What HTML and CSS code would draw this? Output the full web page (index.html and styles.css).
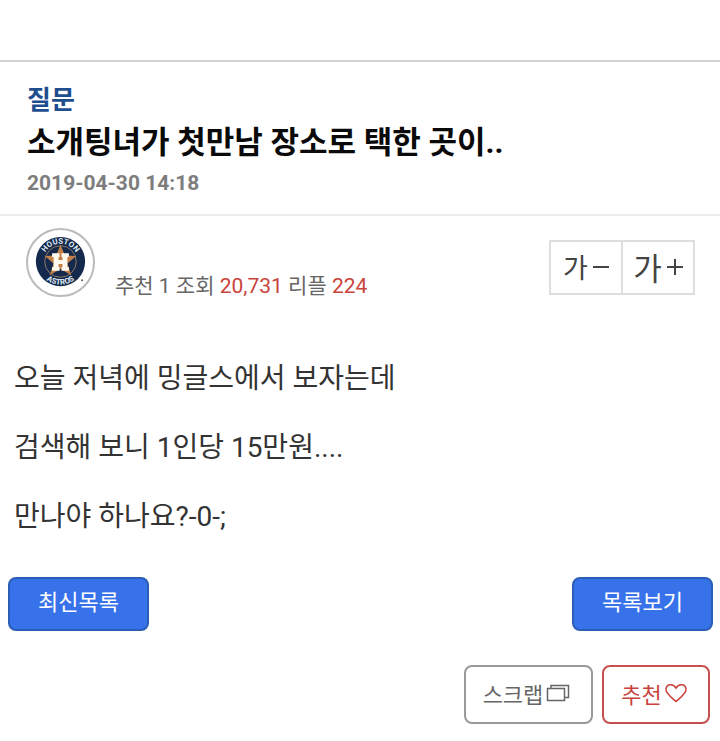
FILE: index.html
```
<!DOCTYPE html>
<html lang="ko">
<head>
  <meta charset="UTF-8">
  <meta name="viewport" content="width=device-width, initial-scale=1.0">
  <title>소개팅녀가 첫만남 장소로 택한 곳이..</title>
  <link rel="stylesheet" href="styles.css">
</head>
<body>
  <header class="post-head">
    <a class="category" href="#">질문</a>
    <h1>소개팅녀가 첫만남 장소로 택한 곳이..</h1>
    <time datetime="2019-04-30T14:18">2019-04-30 14:18</time>
  </header>

  <div class="post-info">
    <div class="avatar">
      <svg viewBox="0 0 66 66" role="img" aria-label="Houston Astros">
        <defs>
          <path id="arcTop" d="M15 32 A18 18 0 0 1 51 32"/>
          <path id="arcBottom" d="M9.500 32 A23.500 23.500 0 0 0 56.500 32"/>
        </defs>
        <circle cx="33" cy="32" r="25" fill="#14294b"/>
        <circle cx="33" cy="32" r="16" fill="none" stroke="#8f7a6a" stroke-width="1"/>
        <path d="M33 15 L37.500 26 L49 26.500 L40 34 L44 46 L33 39.500 L22 46 L26 34 L17 26.500 L28.500 26 Z" fill="#c08048"/>
        <path d="M24.500 23.500 H32 V27.500 H31 V30.500 H35 V27.500 H34 V23.500 H41.500 V27.500 H40 V37.500 H41.500 V41.500 H34 V37.500 H35 V34.500 H31 V37.500 H32 V41.500 H24.500 V37.500 H26 V27.500 H24.500 Z" fill="#fffaf0"/>
        <text class="logo-text"><textPath href="#arcTop" startOffset="50%">HOUSTON</textPath></text>
        <text class="logo-text"><textPath href="#arcBottom" startOffset="50%">ASTROS</textPath></text>
        <circle cx="55" cy="51" r="1" fill="#6b5050"/>
      </svg>
    </div>
    <p class="counts">추천 1 조회 <span class="num">20,731</span> 리플 <span class="num">224</span></p>
    <div class="font-size">
      <button type="button" class="smaller" aria-label="글자 작게">가
        <svg width="16" height="18" viewBox="0 0 16 18"><path d="M0 9H16"/></svg>
      </button>
      <button type="button" class="larger" aria-label="글자 크게">가
        <svg width="16" height="18" viewBox="0 0 16 18"><path d="M0 9H16M8 1V17"/></svg>
      </button>
    </div>
  </div>

  <main class="post-body">
    <p>오늘 저녁에 밍글스에서 보자는데</p>
    <p>검색해 보니 1인당 15만원....</p>
    <p>만나야 하나요?-0-;</p>
  </main>

  <nav class="list-nav">
    <button type="button" class="btn-list">최신목록</button>
    <button type="button" class="btn-list">목록보기</button>
  </nav>

  <div class="actions">
    <button type="button" class="btn-scrap">스크랩
      <svg width="24" height="20" viewBox="0 0 24 20"><path d="M1.500 5.500H18.500V17.500H1.500ZM5 5V2.500H22.500V14.500H19"/></svg>
    </button>
    <button type="button" class="btn-like">추천
      <svg width="22" height="20" viewBox="0 0 22 20"><path d="M11 18.500C8 15.500 1 11 1 6.500C1 1 8 0 11 5C14 0 21 1 21 6.500C21 11 14 15.500 11 18.500Z"/></svg>
    </button>
  </div>
</body>
</html>
```
FILE: styles.css
```
* { box-sizing: border-box; }
body { margin: 0; padding-top: 60px; background: #fff; color: #333; font-family: Roboto, "Noto Sans CJK KR", sans-serif; }
h1, p { margin: 0; }
a { text-decoration: none; }
button { padding: 0; background: #fff; font-family: inherit; cursor: pointer; }
svg { display: block; fill: none; stroke: currentColor; stroke-width: 2; }

.post-head { padding: 20px 27px 16px; border-top: 2px solid #d2d2d2; border-bottom: 2px solid #ebebeb; }
.category { display: block; font-size: 26px; line-height: 36px; font-weight: bold; color: #1f4e8f; }
h1 { font-size: 31px; line-height: 50px; font-weight: bold; color: #0a0a0a; }
time { display: block; font-size: 21px; line-height: 30px; font-weight: bold; color: #7d7d7d; }

.post-info { display: flex; align-items: flex-start; padding: 12px 25px 0 26px; }
.avatar { width: 69px; height: 69px; border: 2px solid #bbb; border-radius: 50%; overflow: hidden; }
.avatar svg { width: 100%; height: 100%; stroke: none; }
.logo-text { font-size: 8px; font-weight: bold; fill: #dfe9f2; text-anchor: middle; }
.counts { flex: 1; margin: 42px 0 0 20px; font-size: 21px; line-height: 32px; color: #666; }
.num { color: #c9433c; }

.font-size { display: flex; margin-top: 12px; border: 2px solid #dedede; }
.font-size button { display: flex; align-items: center; justify-content: center; gap: 5px; width: 70px; height: 51px; padding-bottom: 2px; border: 0; color: #444; }
.font-size .larger { width: 72px; border-left: 2px solid #dedede; }
.smaller { font-size: 27px; }
.larger { font-size: 31px; }

.post-body { padding: 57px 14px 0; font-size: 28px; line-height: 39px; }
.post-body p { margin-bottom: 30px; }

.list-nav { display: flex; justify-content: space-between; padding: 11px 7px 0 8px; }
.btn-list { width: 141px; height: 54px; padding-bottom: 8px; border: 2px solid #2b5fb5; border-radius: 8px; background: #3872ea; color: #fff; font-size: 22px; }

.actions { display: flex; justify-content: flex-end; gap: 9px; padding: 34px 10px 18px; }
.actions button { display: flex; align-items: center; justify-content: center; gap: 3px; height: 59px; padding: 0 4px 3px 0; border-radius: 8px; font-size: 22px; }
.actions svg { stroke-width: 1.5; }
.btn-scrap { width: 129px; border: 2px solid #999; color: #666; }
.btn-like { width: 108px; border: 2px solid #c5504d; color: #c9433c; }
```
